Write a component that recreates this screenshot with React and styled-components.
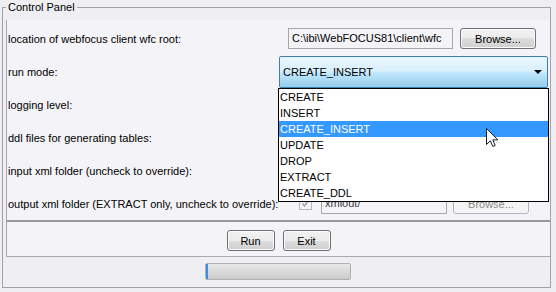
import React from "react";
import styled, { createGlobalStyle } from "styled-components";

const GlobalStyle = createGlobalStyle`
  html, body {
    margin: 0;
    padding: 0;
    background: #efeef2;
  }
  body {
    font-family: "Liberation Sans", Arial, sans-serif;
    font-size: 11px;
    color: #000;
  }
`;

const Window = styled.div`
  width: 556px;
  height: 292px;
  overflow: hidden;
  position: relative;
`;

const Frame = styled.fieldset`
  box-sizing: border-box;
  margin: 1px 0 0 2px;
  padding: 6px 0 0 3px;
  width: 549px;
  height: 287px;
  min-width: 0;
  border: 1px solid #a3a3a6;
  display: flex;
  flex-direction: column;
`;

const Title = styled.legend`
  padding: 0 2px;
  font-size: 11px;
  line-height: 13px;
`;

const FormPanel = styled.div`
  box-sizing: border-box;
  height: 202px;
  padding-top: 2px;
  background: #f4f3f7;
  border-left: 1px solid #a9a9ac;
  border-bottom: 2px solid #98989b;
`;

const Row = styled.div`
  display: grid;
  grid-template-columns: 271px 1fr;
  align-items: center;
  height: 33px;
`;

const Label = styled.div`
  padding-left: 1px;
  white-space: nowrap;
`;

const Controls = styled.div`
  display: flex;
  align-items: center;
  padding-left: ${(p) => p.indent || 0}px;
  position: relative;
  z-index: ${(p) => (p.raised ? 5 : 1)};
`;

const TextField = styled.div`
  box-sizing: border-box;
  width: ${(p) => p.width}px;
  height: 21px;
  border: 1px solid #a7a7aa;
  background: #f4f3f7;
  color: ${(p) => (p.muted ? "#3a3a3a" : "#000")};
  padding-left: 3px;
  line-height: 19px;
  white-space: nowrap;
  overflow: hidden;
`;

const Button = styled.button`
  box-sizing: border-box;
  width: ${(p) => p.width || 76}px;
  height: 21px;
  margin-left: ${(p) => p.gap || 0}px;
  border: 1px solid ${(p) => (p.disabled ? "#b2b5b8" : "#707070")};
  border-radius: 3px;
  padding: 0;
  font-family: "Liberation Sans", Arial, sans-serif;
  font-size: 11px;
  color: ${(p) => (p.disabled ? "#8a8a8a" : "#000")};
  background: ${(p) =>
    p.disabled
      ? "#f4f4f4"
      : "linear-gradient(#f2f2f2 0%, #ebebeb 50%, #dddddd 50%, #cfcfcf 100%)"};
  box-shadow: inset 0 0 0 1px ${(p) => (p.disabled ? "#f7f7f7" : "#fbfbfb")};
`;

const Combo = styled.div`
  box-sizing: border-box;
  position: relative;
  margin-left: 1px;
  width: 269px;
  height: 32px;
  border: 1px solid #3c7fb1;
  border-radius: 2px;
  background: linear-gradient(#eaf6fd 0%, #d9f0fc 45%, #bee6fd 55%, #96cdec 100%);
  display: flex;
  align-items: center;
  justify-content: space-between;
  padding: 0 5px 0 2px;
`;

const ComboText = styled.span`
  padding-left: 1px;
`;

const Arrow = styled.span`
  width: 0;
  height: 0;
  border-left: 4px solid transparent;
  border-right: 4px solid transparent;
  border-top: 4px solid #000;
`;

const List = styled.ul`
  box-sizing: border-box;
  position: absolute;
  top: calc(100% + 1px);
  left: -2px;
  width: 271px;
  margin: 0;
  padding: 0;
  list-style: none;
  background: #fff;
  border: 1px solid #000;
  z-index: 10;
`;

const Item = styled.li`
  height: 16px;
  line-height: 16px;
  padding-left: 1px;
  background: ${(p) => (p.selected ? "#3399ff" : "transparent")};
  color: ${(p) => (p.selected ? "#fff" : "#000")};
`;

const Cursor = styled.svg`
  position: absolute;
  left: 207px;
  top: 39px;
`;

const CheckBox = styled.div`
  box-sizing: border-box;
  width: 13px;
  height: 13px;
  border: 1px solid #b8b8bb;
  background: #f4f4f4;
  margin-right: 9px;
  display: flex;
  align-items: center;
  justify-content: center;
`;

const ButtonBar = styled.div`
  box-sizing: border-box;
  height: 35px;
  padding-top: 8px;
  background: #f4f3f7;
  border-left: 1px solid #a9a9ac;
  border-bottom: 1px solid #a9a9ac;
  display: flex;
  justify-content: center;
  align-items: flex-start;
`;

const StatusArea = styled.div`
  flex: 1;
  display: flex;
  justify-content: center;
  padding-top: 6px;
`;

const Progress = styled.div`
  box-sizing: border-box;
  width: 146px;
  height: 17px;
  border: 1px solid #b0b0b0;
  border-radius: 2px;
  background: linear-gradient(#e9e9e9 0%, #dcdcdc 40%, #cbcbcb 100%);
  display: flex;
`;

const ProgressLead = styled.div`
  width: 2px;
  background: #3a8ee6;
`;

const modes = ["CREATE", "INSERT", "CREATE_INSERT", "UPDATE", "DROP", "EXTRACT", "CREATE_DDL"];

export default function App() {
  return (
    <Window>
      <GlobalStyle />
      <Frame>
        <Title>Control Panel</Title>
        <FormPanel>
          <Row>
            <Label>location of webfocus client wfc root:</Label>
            <Controls indent={10}>
              <TextField width={165}>C:\ibi\WebFOCUS81\client\wfc</TextField>
              <Button gap={7}>Browse...</Button>
            </Controls>
          </Row>
          <Row>
            <Label>run mode:</Label>
            <Controls raised>
              <Combo>
                <ComboText>CREATE_INSERT</ComboText>
                <Arrow />
                <List>
                  {modes.map((m) => (
                    <Item key={m} selected={m === "CREATE_INSERT"}>
                      {m}
                    </Item>
                  ))}
                  <Cursor width="13" height="20" viewBox="0 0 13 20">
                    <path
                      d="M0.5 0.5 L0.5 16.5 L4.3 12.8 L6.8 18.5 L9.2 17.4 L6.8 11.9 L11.8 11.9 Z"
                      fill="#fff"
                      stroke="#1a1f2e"
                      strokeWidth="1"
                      strokeLinejoin="miter"
                    />
                  </Cursor>
                </List>
              </Combo>
            </Controls>
          </Row>
          <Row>
            <Label>logging level:</Label>
            <Controls />
          </Row>
          <Row>
            <Label>ddl files for generating tables:</Label>
            <Controls />
          </Row>
          <Row>
            <Label>input xml folder (uncheck to override):</Label>
            <Controls />
          </Row>
          <Row>
            <Label>output xml folder (EXTRACT only, uncheck to override):</Label>
            <Controls indent={21}>
              <CheckBox>
                <svg width="9" height="9" viewBox="0 0 9 9">
                  <path d="M1.5 4.5 L3.5 7 L7.5 1.5" fill="none" stroke="#a4a4a4" strokeWidth="1.6" />
                </svg>
              </CheckBox>
              <TextField width={126} muted>
                xmlout/
              </TextField>
              <Button gap={6} disabled>
                Browse...
              </Button>
            </Controls>
          </Row>
        </FormPanel>
        <ButtonBar>
          <Button width={48}>Run</Button>
          <Button width={48} gap={8}>
            Exit
          </Button>
        </ButtonBar>
        <StatusArea>
          <Progress>
            <ProgressLead />
          </Progress>
        </StatusArea>
      </Frame>
    </Window>
  );
}
